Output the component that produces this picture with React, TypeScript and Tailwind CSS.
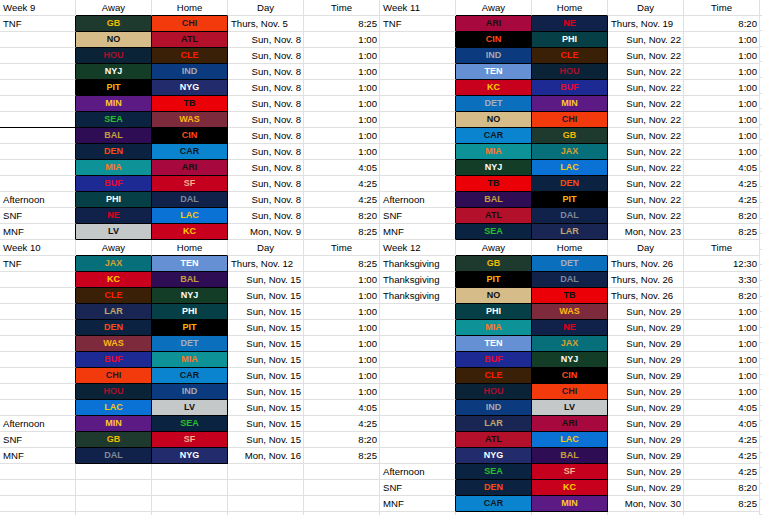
import React from 'react'

type Team = { bg: string; fg: string }

// bg / text class pairs per team, written out so Tailwind sees them
const teams: Record<string, string> = {
  GB: 'bg-[#1e3a2f] text-[#f5b800]',
  CHI: 'bg-[#f23a0c] text-[#1a1c2c]',
  NO: 'bg-[#d6bc88] text-[#111111]',
  ATL: 'bg-[#b3102c] text-[#111111]',
  HOU: 'bg-[#0b2337] text-[#a8102c]',
  CLE: 'bg-[#3a2006] text-[#ff1e00]',
  NYJ: 'bg-[#133d26] text-white',
  IND: 'bg-[#0b3a7e] text-[#a4aab0]',
  PIT: 'bg-black text-[#ffb800]',
  NYG: 'bg-[#222b6c] text-white',
  MIN: 'bg-[#5c1a84] text-[#ffc72c]',
  TB: 'bg-[#ea0006] text-[#111111]',
  SEA: 'bg-[#0a2340] text-[#2bc02a]',
  WAS: 'bg-[#7d2b3c] text-[#ffb612]',
  BAL: 'bg-[#2f0d55] text-[#c2a03e]',
  CIN: 'bg-black text-[#ff4a14]',
  DEN: 'bg-[#0b2340] text-[#ff4a10]',
  CAR: 'bg-[#0a84cf] text-[#101820]',
  MIA: 'bg-[#0d9397] text-[#ff7a1a]',
  ARI: 'bg-[#a7093e] text-[#111111]',
  BUF: 'bg-[#1d2a94] text-[#e60b2a]',
  SF: 'bg-[#c4001e] text-[#f5b28e]',
  PHI: 'bg-[#073f46] text-white',
  DAL: 'bg-[#10214a] text-[#7f8a99]',
  NE: 'bg-[#10214a] text-[#e3001b]',
  LAC: 'bg-[#0a72d5] text-[#ffc20e]',
  LV: 'bg-[#c4c8c9] text-[#111111]',
  KC: 'bg-[#c8001e] text-[#ffcc00]',
  JAX: 'bg-[#066f7a] text-[#d6a22a]',
  TEN: 'bg-[#6591d4] text-white',
  LAR: 'bg-[#192653] text-[#c2a66b]',
  DET: 'bg-[#0a6fbd] text-[#a4b0ba]',
}

type Game = [string, string, string, string, string]

const week9: Game[] = [
  ['TNF', 'GB', 'CHI', 'Thurs, Nov. 5', '8:25'],
  ['', 'NO', 'ATL', 'Sun, Nov. 8', '1:00'],
  ['', 'HOU', 'CLE', 'Sun, Nov. 8', '1:00'],
  ['', 'NYJ', 'IND', 'Sun, Nov. 8', '1:00'],
  ['', 'PIT', 'NYG', 'Sun, Nov. 8', '1:00'],
  ['', 'MIN', 'TB', 'Sun, Nov. 8', '1:00'],
  ['', 'SEA', 'WAS', 'Sun, Nov. 8', '1:00'],
  ['', 'BAL', 'CIN', 'Sun, Nov. 8', '1:00'],
  ['', 'DEN', 'CAR', 'Sun, Nov. 8', '1:00'],
  ['', 'MIA', 'ARI', 'Sun, Nov. 8', '4:05'],
  ['', 'BUF', 'SF', 'Sun, Nov. 8', '4:25'],
  ['Afternoon', 'PHI', 'DAL', 'Sun, Nov. 8', '4:25'],
  ['SNF', 'NE', 'LAC', 'Sun, Nov. 8', '8:20'],
  ['MNF', 'LV', 'KC', 'Mon, Nov. 9', '8:25'],
]

const week10: Game[] = [
  ['TNF', 'JAX', 'TEN', 'Thurs, Nov. 12', '8:25'],
  ['', 'KC', 'BAL', 'Sun, Nov. 15', '1:00'],
  ['', 'CLE', 'NYJ', 'Sun, Nov. 15', '1:00'],
  ['', 'LAR', 'PHI', 'Sun, Nov. 15', '1:00'],
  ['', 'DEN', 'PIT', 'Sun, Nov. 15', '1:00'],
  ['', 'WAS', 'DET', 'Sun, Nov. 15', '1:00'],
  ['', 'BUF', 'MIA', 'Sun, Nov. 15', '1:00'],
  ['', 'CHI', 'CAR', 'Sun, Nov. 15', '1:00'],
  ['', 'HOU', 'IND', 'Sun, Nov. 15', '1:00'],
  ['', 'LAC', 'LV', 'Sun, Nov. 15', '4:05'],
  ['Afternoon', 'MIN', 'SEA', 'Sun, Nov. 15', '4:25'],
  ['SNF', 'GB', 'SF', 'Sun, Nov. 15', '8:20'],
  ['MNF', 'DAL', 'NYG', 'Mon, Nov. 16', '8:25'],
]

const week11: Game[] = [
  ['TNF', 'ARI', 'NE', 'Thurs, Nov. 19', '8:20'],
  ['', 'CIN', 'PHI', 'Sun, Nov. 22', '1:00'],
  ['', 'IND', 'CLE', 'Sun, Nov. 22', '1:00'],
  ['', 'TEN', 'HOU', 'Sun, Nov. 22', '1:00'],
  ['', 'KC', 'BUF', 'Sun, Nov. 22', '1:00'],
  ['', 'DET', 'MIN', 'Sun, Nov. 22', '1:00'],
  ['', 'NO', 'CHI', 'Sun, Nov. 22', '1:00'],
  ['', 'CAR', 'GB', 'Sun, Nov. 22', '1:00'],
  ['', 'MIA', 'JAX', 'Sun, Nov. 22', '1:00'],
  ['', 'NYJ', 'LAC', 'Sun, Nov. 22', '4:05'],
  ['', 'TB', 'DEN', 'Sun, Nov. 22', '4:25'],
  ['Afternoon', 'BAL', 'PIT', 'Sun, Nov. 22', '4:25'],
  ['SNF', 'ATL', 'DAL', 'Sun, Nov. 22', '8:20'],
  ['MNF', 'SEA', 'LAR', 'Mon, Nov. 23', '8:25'],
]

const week12: Game[] = [
  ['Thanksgiving', 'GB', 'DET', 'Thurs, Nov. 26', '12:30'],
  ['Thanksgiving', 'PIT', 'DAL', 'Thurs, Nov. 26', '3:30'],
  ['Thanksgiving', 'NO', 'TB', 'Thurs, Nov. 26', '8:20'],
  ['', 'PHI', 'WAS', 'Sun, Nov. 29', '1:00'],
  ['', 'MIA', 'NE', 'Sun, Nov. 29', '1:00'],
  ['', 'TEN', 'JAX', 'Sun, Nov. 29', '1:00'],
  ['', 'BUF', 'NYJ', 'Sun, Nov. 29', '1:00'],
  ['', 'CLE', 'CIN', 'Sun, Nov. 29', '1:00'],
  ['', 'HOU', 'CHI', 'Sun, Nov. 29', '1:00'],
  ['', 'IND', 'LV', 'Sun, Nov. 29', '4:05'],
  ['', 'LAR', 'ARI', 'Sun, Nov. 29', '4:05'],
  ['', 'ATL', 'LAC', 'Sun, Nov. 29', '4:25'],
  ['', 'NYG', 'BAL', 'Sun, Nov. 29', '4:25'],
  ['Afternoon', 'SEA', 'SF', 'Sun, Nov. 29', '4:25'],
  ['SNF', 'DEN', 'KC', 'Sun, Nov. 29', '8:20'],
  ['MNF', 'CAR', 'MIN', 'Mon, Nov. 30', '8:25'],
]

const cell = 'h-4 border-r border-b border-[#e0e0e0] flex items-center overflow-visible whitespace-nowrap'
const row = 'grid grid-cols-[76px_76px_76px_76px_76px] h-4'

function Header({ week }: { week: string }) {
  return (
    <div className={row}>
      <div className={`${cell} px-[3px]`}>{week}</div>
      <div className={`${cell} justify-center border-b-black`}>Away</div>
      <div className={`${cell} justify-center border-b-black`}>Home</div>
      <div className={`${cell} justify-center`}>Day</div>
      <div className={`${cell} justify-center`}>Time</div>
    </div>
  )
}

function GameRow({ g, mark }: { g: Game; mark?: boolean }) {
  const [label, away, home, day, time] = g
  const thurs = day.startsWith('Thurs')
  return (
    <div className={row}>
      <div className={`${cell} px-[3px] border-r-black ${mark ? 'border-b-black' : ''}`}>{label}</div>
      <div className={`h-4 border-r border-b border-black flex items-center justify-center font-bold text-[9px] ${teams[away]}`}>{away}</div>
      <div className={`h-4 border-r border-b border-black flex items-center justify-center font-bold text-[9px] ${teams[home]}`}>{home}</div>
      <div className={`${cell} px-[2px] ${thurs ? 'justify-start pl-[3px]' : 'justify-end'}`}>{day}</div>
      <div className={`${cell} justify-end px-[2px]`}>{time}</div>
    </div>
  )
}

function EmptyRow() {
  return (
    <div className={row}>
      <div className={cell} />
      <div className={cell} />
      <div className={cell} />
      <div className={cell} />
      <div className={cell} />
    </div>
  )
}

export default function App() {
  return (
    <div className="w-[762px] h-[515px] overflow-hidden bg-white text-black text-[9.6px] leading-none font-['Liberation_Sans',Arial,sans-serif] flex">
      {/* Week 9 / Week 10 */}
      <div className="flex flex-col w-[380px] shrink-0">
        <Header week="Week 9" />
        {week9.map((g, i) => <GameRow key={i} g={g} mark={i === 6} />)}
        <Header week="Week 10" />
        {week10.map((g, i) => <GameRow key={i} g={g} />)}
        <EmptyRow />
        <EmptyRow />
        <EmptyRow />
        <EmptyRow />
      </div>
      {/* Week 11 / Week 12 */}
      <div className="flex flex-col w-[380px] shrink-0">
        <Header week="Week 11" />
        {week11.map((g, i) => <GameRow key={i} g={g} />)}
        <Header week="Week 12" />
        {week12.map((g, i) => <GameRow key={i} g={g} />)}
        <EmptyRow />
      </div>
      <div className="flex flex-col flex-1">
        {Array.from({ length: 33 }).map((_, i) => (
          <div key={i} className="h-4 border-b border-[#e0e0e0]" />
        ))}
      </div>
    </div>
  )
}
